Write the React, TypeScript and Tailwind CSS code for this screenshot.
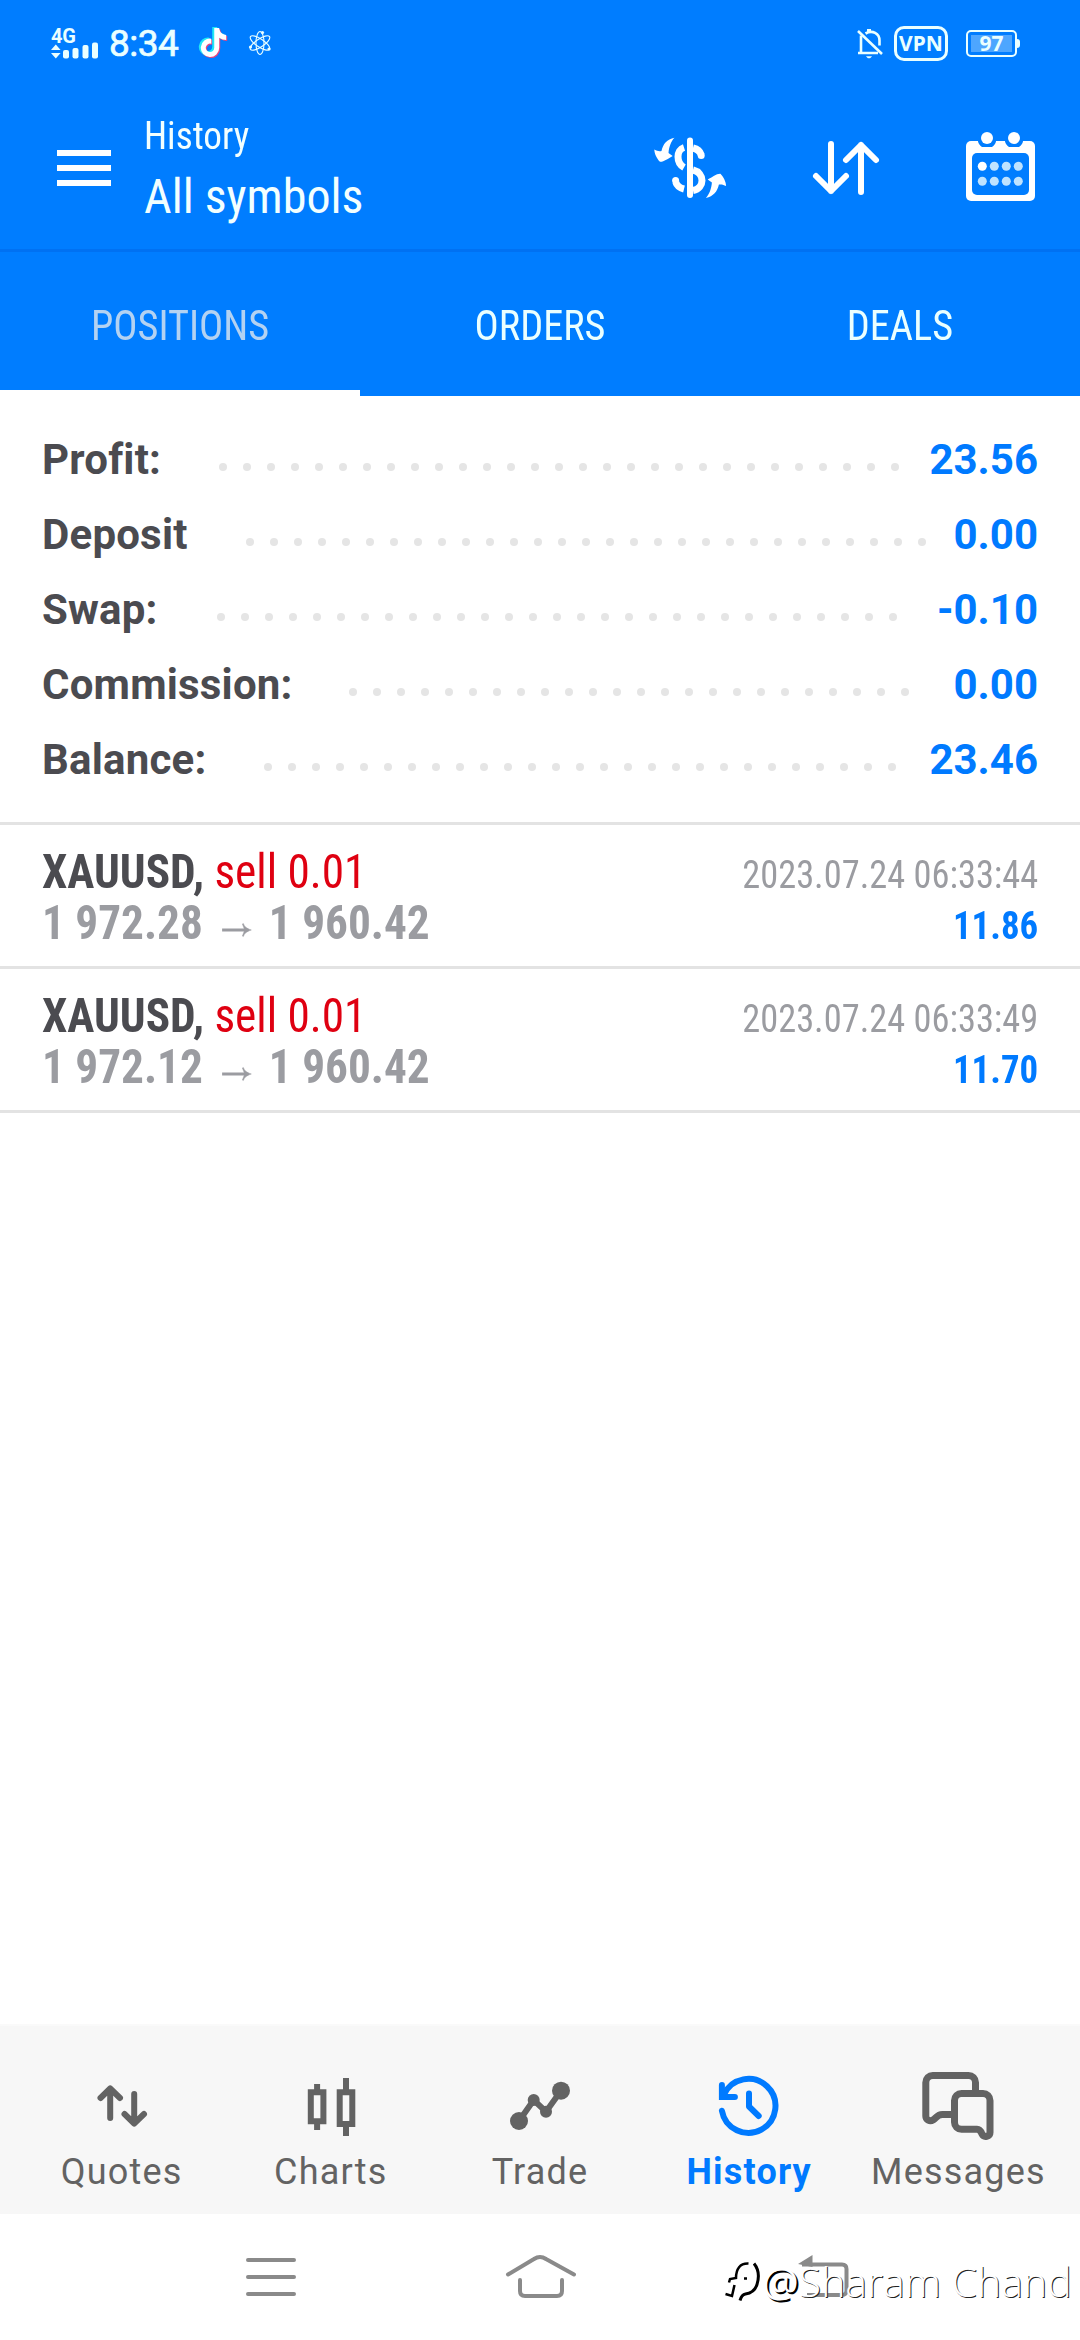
import React from 'react';
import { FaTiktok } from 'react-icons/fa6';
import clsx from 'clsx';

const summary = [
  { label: 'Profit:', value: '23.56', dots: 29, offset: 'pr-[139px]' },
  { label: 'Deposit', value: '0.00', dots: 29, offset: 'pr-[112px]' },
  { label: 'Swap:', value: '-0.10', dots: 29, offset: 'pr-[141px]' },
  { label: 'Commission:', value: '0.00', dots: 24, offset: 'pr-[129px]' },
  { label: 'Balance:', value: '23.46', dots: 27, offset: 'pr-[142px]' },
];

const positions = [
  { symbol: 'XAUUSD', side: 'sell 0.01', open: '1 972.28', close: '1 960.42', time: '2023.07.24 06:33:44', profit: '11.86' },
  { symbol: 'XAUUSD', side: 'sell 0.01', open: '1 972.12', close: '1 960.42', time: '2023.07.24 06:33:49', profit: '11.70' },
];

const tabs = ['POSITIONS', 'ORDERS', 'DEALS'];

const swapArrow =
  'M24.5 5.7C17 7 13 12 11.5 19C9 19.5 7 19 4.3 17.5C4.5 22 7 27 10 29.8C14 30 18 26.5 22.7 24L18.5 21C19 15 21 9 24.5 5.7z';

const StatusBar = () => (
  <div className="flex h-[87px] items-center justify-between pl-[50px] pr-[60px] text-[#eaffff]">
    <div className="flex items-center">
      <svg width="50" height="40" viewBox="0 -3 50 40" fill="currentColor">
        <text x="1" y="16" fontSize="20" fontWeight="700" textLength="25" className="font-['Roboto',sans-serif]">
          4G
        </text>
        <path d="M1 23l4.8-5.5L10.6 23zM1 26h9.6L5.8 31.5z" />
        <rect x="13" y="23" width="6" height="8.5" rx="2" />
        <rect x="22.5" y="21" width="6" height="10.5" rx="2" />
        <rect x="32.5" y="18" width="6" height="13.5" rx="2" />
        <rect x="42" y="15.5" width="6" height="16" rx="2" />
      </svg>
      <span className="ml-[9px] font-['Roboto',sans-serif] text-[37px] leading-[40px] tracking-[-0.5px] [-webkit-text-stroke:0.7px_currentColor]">
        8:34
      </span>
      <FaTiktok
        size={29}
        className="ml-[21px] mt-[-3px] text-white [filter:drop-shadow(-1.5px_-1px_0_#1fe8f5)_drop-shadow(1.5px_1px_0_#e8457f)]"
      />
      <svg className="ml-[19px]" width="26" height="28" viewBox="0 0 26 28" fill="none" stroke="currentColor" strokeWidth="1.1">
        <ellipse cx="13" cy="13" rx="4" ry="11.5" />
        <ellipse cx="13" cy="13" rx="4" ry="11.5" transform="rotate(56 13 13)" />
        <ellipse cx="13" cy="13" rx="4" ry="11.5" transform="rotate(-56 13 13)" />
        <g fill="currentColor" stroke="none">
          <circle cx="15.5" cy="2.5" r="1.6" />
          <circle cx="3.5" cy="17" r="1.6" />
          <circle cx="22" cy="19" r="1.6" />
        </g>
      </svg>
    </div>
    <div className="flex items-center">
      <svg width="28" height="32" viewBox="0 0 28 32" fill="none" stroke="currentColor" strokeWidth="2.6">
        <path d="M2 3l24 23" />
        <path d="M5 7.5V25M2 25h20M9.5 5.5c7-4 14 0 14 7v5" />
        <path d="M13 1v3" strokeWidth="4" />
        <path d="M10.5 28.5c1 2 4 2 5 0z" fill="currentColor" strokeWidth="0.5" />
      </svg>
      <div className="ml-[10px] flex h-[35px] w-[54px] items-center justify-center rounded-[10px] border-[3px] border-current font-['Noto_Sans',sans-serif] text-[21px] font-bold">
        VPN
      </div>
      <div className="ml-[18px] flex h-[27px] w-[51px] items-center rounded-[5px] border-2 border-current px-[3px]">
        <div className="flex h-[17px] w-[41px] items-center justify-center bg-[#4da6ff] font-['Noto_Sans',sans-serif] text-[21px] leading-none font-bold">
          97
        </div>
      </div>
      <div className="h-[9px] w-[3px] rounded-r-sm bg-current" />
    </div>
  </div>
);

const Toolbar = () => (
  <div className="flex h-[162px] items-center pl-[57px] pr-[42px] text-white">
    <button className="flex flex-col gap-[9px]" aria-label="Open menu">
      <span className="h-[6px] w-[54px] bg-current" />
      <span className="h-[6px] w-[54px] bg-current" />
      <span className="h-[6px] w-[54px] bg-current" />
    </button>
    <div className="ml-[33px] flex-1 pt-[2px] text-[#f2ffff]">
      <p className="origin-left scale-x-[.955] text-[39px] leading-[56px]">History</p>
      <p className="text-[48px] leading-[66px]">All symbols</p>
    </div>
    <div className="flex items-center">
      {/* Currency exchange */}
      <svg width="80" height="72" viewBox="0 0 80 72" fill="none" stroke="currentColor" strokeWidth="7">
        <path d="M40 8.5V63" strokeWidth="6" strokeLinecap="round" />
        <path d="M34 15.5C26 18 26 31 34 35.5" />
        <path d="M43 16c4 1 7 3 8.2 6.8" />
        <path d="M43 38c12 3 12 18 0 20.5" />
        <path d="M34 57c-4-1-7-3-8.2-6.8" />
        <g fill="currentColor" stroke="none">
          <circle cx="51.2" cy="23.5" r="3.5" />
          <circle cx="25.6" cy="48.5" r="3.5" />
          <path d={swapArrow} />
          <path d={swapArrow} transform="rotate(180 40.2 35.8)" />
        </g>
      </svg>
      {/* Sort */}
      <svg className="ml-[80px]" width="72" height="64" viewBox="0 0 72 64" fill="none" stroke="currentColor" strokeWidth="6" strokeLinecap="round" strokeLinejoin="round">
        <path d="M21 8v47M6 40l15 15 15-15" />
        <path d="M51 56V9M36 24L51 9l15 15" />
      </svg>
      {/* Calendar */}
      <svg className="ml-[81px]" width="75" height="76" viewBox="0 0 75 76" fill="currentColor">
        <rect x="3" y="11" width="69" height="60" rx="5" />
        <rect x="9" y="23" width="57" height="42" rx="5" fill="#007dff" />
        <path d="M15 8h18a9 9 0 0 1-4 9h-10a9 9 0 0 1-4-9zM42 8h18a9 9 0 0 1-4 9h-10a9 9 0 0 1-4-9z" fill="#007dff" />
        <circle cx="24" cy="8" r="6" />
        <circle cx="51" cy="8" r="6" />
        <circle cx="19.3" cy="36.3" r="4.5" />
        <g fill="#bfe3ff">
          <circle cx="31.3" cy="36.3" r="4.5" />
          <circle cx="43.3" cy="36.3" r="4.5" />
          <circle cx="55.3" cy="36.3" r="4.5" />
          <circle cx="19.3" cy="51.3" r="4.5" />
          <circle cx="31.3" cy="51.3" r="4.5" />
          <circle cx="43.3" cy="51.3" r="4.5" />
          <circle cx="55.3" cy="51.3" r="4.5" />
        </g>
      </svg>
    </div>
  </div>
);

const Tabs = () => (
  <div className="grid h-[147px] grid-cols-3 border-t-[3px] border-[#0071f2]">
    {tabs.map((tab, i) => (
      <div
        key={tab}
        className={clsx(
          'h-[144px] text-center text-[42px]',
          i === 0 ? 'border-b-[6px] border-white text-[#b3d2f2]' : 'text-[#eaffff]'
        )}
      >
        <span className="block scale-x-[.96] leading-[147px]">{tab}</span>
      </div>
    ))}
  </div>
);

const Summary = () => (
  <section className="border-b-[3px] border-[#e3e3e3] px-[42px] pt-[26px] pb-[25px] font-['Roboto',sans-serif] text-[42px] font-bold">
    {summary.map((row) => (
      <div key={row.label} className="relative flex h-[75px] items-center justify-between">
        <span className="tracking-[0.2px] text-[#4b4b50]">{row.label}</span>
        <span className="text-[#007aff]">{row.value}</span>
        {/* dotted leader between the label and the value */}
        <div className={clsx('absolute inset-x-0 top-[41px] flex justify-end gap-[16px]', row.offset)}>
          {Array.from({ length: row.dots }, (_, i) => (
            <i key={i} className="size-[8px] shrink-0 rounded-full bg-[#e5e5e5]" />
          ))}
        </div>
      </div>
    ))}
  </section>
);

const PositionRow = ({ item }: { item: (typeof positions)[number] }) => (
  <div className="h-[144px] border-b-[3px] border-[#e3e3e3] px-[42px] pt-[21px]">
    <div className="flex h-[51px] items-baseline justify-between leading-[51px]">
      <p className="origin-left scale-x-[.943] text-[48px]">
        <span className="font-bold text-[#4b4b50]">{item.symbol},</span>{' '}
        <span className="text-[#df0011]">{item.side}</span>
      </p>
      <p className="origin-right scale-x-[.933] text-[39px] text-[#9b9ca1]">{item.time}</p>
    </div>
    <div className="flex h-[51px] items-baseline justify-between leading-[51px] font-bold">
      <p className="flex origin-left scale-x-[.943] items-baseline text-[48px] text-[#9b9ca1]">
        {item.open}
        <svg className="mr-[17px] ml-[19px]" width="34" height="18" viewBox="0 0 34 18" fill="none" stroke="currentColor">
          <path d="M1 9h28" strokeWidth="3" />
          <path d="M23.5 2.5c1 3 4 5.5 8.5 6.5c-4.5 1-7.5 3.5-8.5 6.5l-1-.5 2.500-6-2.500-6z" fill="currentColor" strokeWidth="0.5" />
        </svg>
        {item.close}
      </p>
      <p className="origin-right scale-x-[.945] text-[39px] text-[#007aff]">{item.profit}</p>
    </div>
  </div>
);

const NavItem = ({ label, active, children }: { label: string; active?: boolean; children: React.ReactNode }) => (
  <div className={clsx('flex flex-col items-center pt-[44px]', active ? 'font-bold text-[#007aff]' : 'text-[#636363]')}>
    <svg width="72" height="72" viewBox="0 0 72 72" fill="none" stroke="currentColor" strokeWidth="6">
      {children}
    </svg>
    <span className="mt-[10px] text-[36px] leading-[40px] tracking-[1.2px]">{label}</span>
  </div>
);

const BottomNav = () => (
  <nav className="grid h-[190px] grid-cols-5 border-t-2 border-[#fafafa] bg-[#f7f7f7] px-[17px] font-['Roboto',sans-serif]">
    <NavItem label="Quotes">
      <g strokeLinecap="round" strokeLinejoin="round">
        <path d="M24.2 48V19M14.5 28l9.7-9.5L34 28" />
        <path d="M48.2 24v29M38.5 44l9.7 9.5L58 44" />
      </g>
    </NavItem>
    <NavItem label="Charts">
      <path d="M15.8 22.3h12.6v29H15.8zM22.1 14v6M22.1 54v6" />
      <path d="M44.7 22.3h12.6v31.7H44.7zM51 8v12M51 57v9" />
    </NavItem>
    <NavItem label="Trade">
      <path d="M15 51l14.7-21L42 41.7l15-21" />
      <g fill="currentColor" stroke="none">
        <circle cx="15" cy="51" r="9" />
        <circle cx="29.7" cy="30" r="6" />
        <circle cx="42" cy="41.7" r="6" />
        <circle cx="57" cy="20.7" r="9" />
      </g>
    </NavItem>
    <NavItem label="History" active>
      <g strokeLinecap="round">
        <path d="M8.9 40.7A27 27 0 1 0 11 24.5" />
        <path d="M8.9 15v12h13" />
        <path d="M36 23.5v13l9.7 9.5" strokeLinejoin="round" />
      </g>
    </NavItem>
    <NavItem label="Messages">
      <g strokeWidth="7">
        <path d="M53.5 21v-8.5a7 7 0 0 0-7-7H10.8a7 7 0 0 0-7 7V46c0 4 4 6 7.5 3.8c3-2 4-5.3 9-5.3H30" />
        <path d="M39.5 23.5H61a7 7 0 0 1 7 7v32c0 4-6 5.5-8 1.5c-1-2.5-2-4.7-5-4.7H39.5a7 7 0 0 1-7-7V30.5a7 7 0 0 1 7-7z" />
      </g>
    </NavItem>
  </nav>
);

const SystemBar = () => (
  <div className="relative grid h-[126px] grid-cols-3 items-center justify-items-center pr-[134px] pl-[136px] text-[#8a8a8a]">
    <svg width="90" height="60" viewBox="0 0 90 60" fill="none" stroke="currentColor" strokeWidth="4" strokeLinecap="round">
      <path d="M22 13h46M22 30h46M22 47h46" />
    </svg>
    <svg width="90" height="60" viewBox="0 0 90 60" fill="none" stroke="currentColor" strokeWidth="4" strokeLinecap="round">
      <path d="M12 27.5L38 12q6-4 12 0l28 15.5" />
      <path d="M24 33v11q0 5 5 5h32q5 0 5-5V33" />
    </svg>
    <svg width="90" height="60" viewBox="0 0 90 60" fill="none" stroke="currentColor" strokeWidth="4">
      <path d="M36 17.5h40q4.500 0 4.500 4.500v21.500q0 4.500-4.500 4.500H41" />
      <path d="M32 17l14.500-9v12z" fill="currentColor" stroke="none" />
    </svg>
    {/* Author mark over the system buttons */}
    <div className="absolute top-[43px] left-[724px] flex items-center">
      <svg width="38" height="46" viewBox="0 0 38 46" fill="none" stroke="#000" strokeWidth="2.5">
        <path d="M5 24.500l1-3.500 6-1c0-9 4-15 12.500-14.500M10.500 27L8 38l-6.500-2M20 20.500h3" />
        <path d="M30 5.500c4 5 5.500 13 3 21-2.500 8-8 9-11.500 9.500-3 .5-4.500 3-5.500 6.500" strokeWidth="3" />
      </svg>
      <span className="font-['Open_Sans',sans-serif] text-[41px] leading-[48px] font-light whitespace-nowrap text-white [text-shadow:1px_1px_0_#222]">
        <span className="font-normal [text-shadow:2px_2px_0_#000]">@</span>Sharam Chand
      </span>
    </div>
  </div>
);

export default function App() {
  return (
    <div className="flex h-[2340px] w-[1080px] flex-col overflow-hidden bg-white font-['Roboto_Condensed',sans-serif]">
      <header className="bg-[#007dff]">
        <StatusBar />
        <Toolbar />
        <Tabs />
      </header>
      <main className="flex-1">
        <Summary />
        {positions.map((item) => (
          <PositionRow key={item.time} item={item} />
        ))}
      </main>
      <BottomNav />
      <SystemBar />
    </div>
  );
}
